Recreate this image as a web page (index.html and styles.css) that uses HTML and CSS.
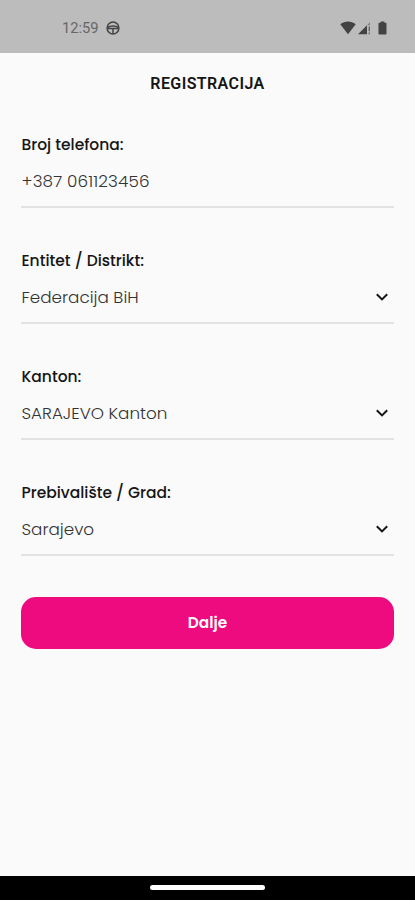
FILE: index.html
```html
<!DOCTYPE html>
<html lang="bs">
<head>
    <meta charset="UTF-8">
    <meta name="viewport" content="width=device-width, initial-scale=1.0">
    <title>Registracija</title>
    <link rel="stylesheet" href="styles.css">
</head>
<body>
    <div class="status-bar">
        <span class="time">12:59</span>
        <svg width="14" height="14" viewBox="0 0 14 14" fill="none" stroke="#444" stroke-width="1.5">
            <circle cx="7" cy="7" r="5.9"/>
            <path d="M1.5 6.6C4 4.6 10 4.6 12.5 6.6M1.5 7.6h11M7 7.6V13"/>
        </svg>
        <div class="status-icons">
            <svg width="16" height="14" viewBox="0 0 16 14" fill="#424242">
                <path d="M0.3 3.2C4.8-0.3 11.2-0.3 15.7 3.2L8 13.2z"/>
            </svg>
            <svg width="13" height="14" viewBox="0 0 13 14" fill="#424242">
                <path d="M0 13.2L9 4.2v9z"/>
                <path d="M9.5 3.7L12 1.2v3H9.5z" opacity="0.5"/>
                <path d="M10.6 5.5H12v4.8h-1.4zM10.6 11.5H12v1.7h-1.4z" opacity="0.7"/>
            </svg>
            <svg class="battery" width="9" height="14" viewBox="0 0 9 14" fill="#424242">
                <path d="M2.6 0.5h3.8v1.3H7.6a.9.9 0 0 1 .9.9v9.8a.9.9 0 0 1-.9.9H1.4a.9.9 0 0 1-.9-.9V2.7a.9.9 0 0 1 .9-.9h1.2z"/>
            </svg>
        </div>
    </div>
    <main>
        <h1>REGISTRACIJA</h1>
        <form>
            <div class="field">
                <label>Broj telefona:</label>
                <div class="value phone">+387 061123456</div>
            </div>
            <div class="field">
                <label>Entitet / Distrikt:</label>
                <div class="value">
                    <span>Federacija BiH</span>
                    <svg width="14" height="10" viewBox="0 0 14 10"><path d="M1.8 2.2L7 7.4l5.2-5.2"/></svg>
                </div>
            </div>
            <div class="field">
                <label>Kanton:</label>
                <div class="value">
                    <span>SARAJEVO Kanton</span>
                    <svg width="14" height="10" viewBox="0 0 14 10"><path d="M1.8 2.2L7 7.4l5.2-5.2"/></svg>
                </div>
            </div>
            <div class="field">
                <label>Prebivalište / Grad:</label>
                <div class="value">
                    <span>Sarajevo</span>
                    <svg width="14" height="10" viewBox="0 0 14 10"><path d="M1.8 2.2L7 7.4l5.2-5.2"/></svg>
                </div>
            </div>
            <button type="button">Dalje</button>
        </form>
    </main>
    <footer>
        <div class="home-bar"></div>
    </footer>
</body>
</html>
```
FILE: styles.css
```css
* {
    box-sizing: border-box;
}
body {
    margin: 0;
    height: 900px;
    display: flex;
    flex-direction: column;
    background-color: #fafafa;
    font-family: Poppins, Inter, sans-serif;
    color: #151515;
}
.status-bar {
    height: 53px;
    padding: 3px 28px 0 62px;
    display: flex;
    align-items: center;
    background-color: #bcbcbc;
}
.time {
    width: 43.5px;
    font-family: Roboto, sans-serif;
    font-size: 14.7px;
    color: #666;
}
.status-icons {
    margin-left: auto;
    display: flex;
    gap: 2px;
}
.battery {
    margin-left: 5px;
}
main {
    flex: 1;
    padding: 0 21px;
}
h1 {
    margin: 0;
    padding-top: 18px;
    height: 78px;
    font-family: Roboto, sans-serif;
    font-size: 16px;
    font-weight: 600;
    line-height: 26px;
    letter-spacing: 0.4px;
    text-align: center;
}
.field {
    height: 116px;
}
label {
    display: block;
    padding-left: 0.5px;
    font-size: 15.5px;
    font-weight: 500;
    line-height: 28px;
    white-space: nowrap;
}
.value {
    height: 49px;
    padding: 10px 5px 13px 0.5px;
    display: flex;
    align-items: center;
    justify-content: space-between;
    border-bottom: 2px solid #e2e2e2;
    font-size: 16.8px;
    font-weight: 300;
    line-height: 24px;
    color: #333;
}
.value span {
    margin-top: -1px;
}
.phone {
    letter-spacing: 0.15px;
}
.value svg {
    fill: none;
    stroke: #151515;
    stroke-width: 2;
}
button {
    display: block;
    width: 100%;
    height: 52px;
    margin-top: 2px;
    padding: 0 0 2px;
    border: none;
    border-radius: 15px;
    background-color: #ee0a7f;
    color: white;
    font-family: inherit;
    font-size: 15.3px;
    font-weight: 600;
}
footer {
    height: 24px;
    padding-top: 9px;
    background-color: #000;
}
.home-bar {
    width: 115px;
    height: 5px;
    margin: 0 auto;
    border-radius: 3px;
    background-color: #fff;
}
```
